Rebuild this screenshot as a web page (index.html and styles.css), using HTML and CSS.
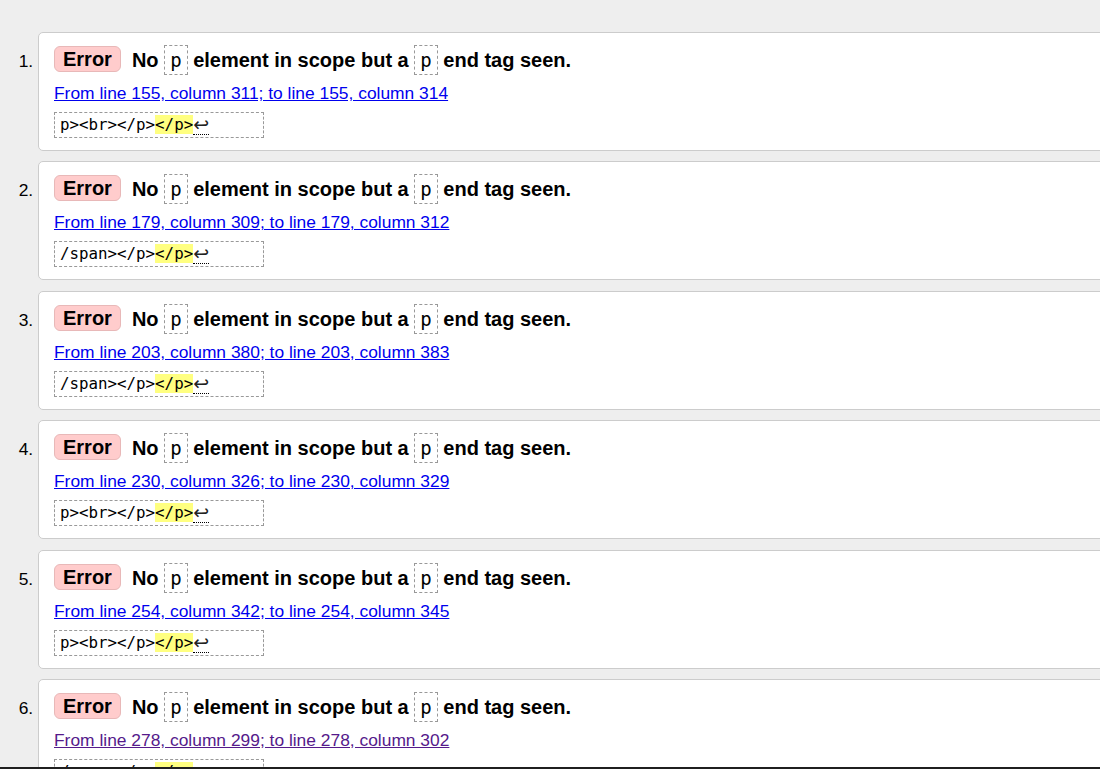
FILE: index.html
```html
<!DOCTYPE html>
<html>
<head>
<meta charset="utf-8">
<title>Nu Html Checker results</title>
<link rel="stylesheet" href="styles.css">
</head>
<body>
<ol class="results">
  <li class="msg">
    <p class="head"><strong class="badge">Error</strong><span class="text">No <code class="tag">p</code> element in scope but a <code class="tag">p</code> end tag seen.</span></p>
    <p class="loc"><a href="#l155">From line 155, column 311; to line 155, column 314</a></p>
    <p class="extract"><code>p&gt;&lt;br&gt;&lt;/p&gt;<b class="hl">&lt;/p&gt;</b><b class="lf">↩</b></code></p>
  </li>
  <li class="msg">
    <p class="head"><strong class="badge">Error</strong><span class="text">No <code class="tag">p</code> element in scope but a <code class="tag">p</code> end tag seen.</span></p>
    <p class="loc"><a href="#l179">From line 179, column 309; to line 179, column 312</a></p>
    <p class="extract"><code>/span&gt;&lt;/p&gt;<b class="hl">&lt;/p&gt;</b><b class="lf">↩</b></code></p>
  </li>
  <li class="msg">
    <p class="head"><strong class="badge">Error</strong><span class="text">No <code class="tag">p</code> element in scope but a <code class="tag">p</code> end tag seen.</span></p>
    <p class="loc"><a href="#l203">From line 203, column 380; to line 203, column 383</a></p>
    <p class="extract"><code>/span&gt;&lt;/p&gt;<b class="hl">&lt;/p&gt;</b><b class="lf">↩</b></code></p>
  </li>
  <li class="msg">
    <p class="head"><strong class="badge">Error</strong><span class="text">No <code class="tag">p</code> element in scope but a <code class="tag">p</code> end tag seen.</span></p>
    <p class="loc"><a href="#l230">From line 230, column 326; to line 230, column 329</a></p>
    <p class="extract"><code>p&gt;&lt;br&gt;&lt;/p&gt;<b class="hl">&lt;/p&gt;</b><b class="lf">↩</b></code></p>
  </li>
  <li class="msg">
    <p class="head"><strong class="badge">Error</strong><span class="text">No <code class="tag">p</code> element in scope but a <code class="tag">p</code> end tag seen.</span></p>
    <p class="loc"><a href="#l254">From line 254, column 342; to line 254, column 345</a></p>
    <p class="extract"><code>p&gt;&lt;br&gt;&lt;/p&gt;<b class="hl">&lt;/p&gt;</b><b class="lf">↩</b></code></p>
  </li>
  <li class="msg">
    <p class="head"><strong class="badge">Error</strong><span class="text">No <code class="tag">p</code> element in scope but a <code class="tag">p</code> end tag seen.</span></p>
    <p class="loc"><a class="visited" href="#l278">From line 278, column 299; to line 278, column 302</a></p>
    <p class="extract"><code>/span&gt;&lt;/p&gt;<b class="hl">&lt;/p&gt;</b><b class="lf">↩</b></code></p>
  </li>
</ol>
<div class="edge"></div>
</body>
</html>
```

FILE: styles.css
```css
html, body {
  margin: 0;
  padding: 0;
  overflow: hidden;
}
body {
  background: #eeeeee;
  font-family: "Liberation Sans", Arial, sans-serif;
  color: #000;
  height: 769px;
}
.results {
  margin: 0 -40px 0 0;
  padding: 32px 0 0 38px;
  font-size: 17.4px;
}
.msg {
  background: #fff;
  border: 1px solid #cccccc;
  border-radius: 5px;
  margin: 0 0 10.4px 0;
  padding: 12px 15px 12px 15px;
}
.msg::marker {
  font-size: 17.4px;
}
.head {
  margin: 0;
  line-height: 30px;
  font-size: 20px;
  font-weight: bold;
}
.badge {
  display: inline-block;
  line-height: 22px;
  padding: 1px 8px;
  border: 1px solid #e8b8b8;
  border-radius: 6px;
  background: #ffcccc;
  margin-right: 11px;
  vertical-align: 1px;
}
.tag {
  display: inline-block;
  font-family: "DejaVu Sans Mono", monospace;
  font-weight: normal;
  font-size: 19px;
  line-height: 26px;
  padding: 1px 5px;
  border: 1px dashed #999;
  vertical-align: top;
}
.loc {
  margin: 7px 0 0 0;
  line-height: 22px;
}
.loc a {
  color: #0000ee;
  text-decoration: underline;
}
.loc a.visited {
  color: #551a8b;
}
.extract {
  margin: 8px 0 0 0;
}
.extract code {
  display: block;
  box-sizing: border-box;
  width: 210px;
  height: 26px;
  font-family: "DejaVu Sans Mono", monospace;
  font-size: 15.8px;
  line-height: 22px;
  padding: 1px 5px;
  border: 1px dashed #999;
  white-space: pre;
}
.hl {
  font-weight: normal;
  background: #ffff80;
}
.lf {
  display: inline-block;
  font-weight: normal;
  font-size: 19px;
  line-height: 20px;
  color: #222;
  border-bottom: 1px dotted #000;
  font-family: "DejaVu Sans", sans-serif;
  vertical-align: top;
}
.edge {
  position: fixed;
  left: 0;
  right: 0;
  bottom: 0;
  height: 2px;
  background: #1f1f1f;
}
```
